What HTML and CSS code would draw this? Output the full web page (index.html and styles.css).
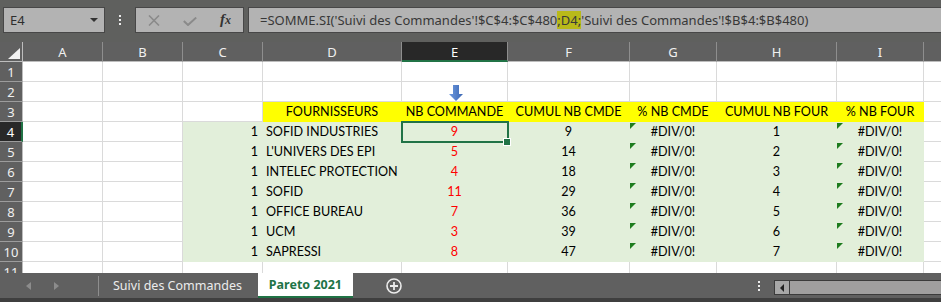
FILE: index.html
```html
<!DOCTYPE html>
<html lang="fr">
<head>
<meta charset="utf-8">
<title>Pareto 2021</title>
<link rel="stylesheet" href="styles.css">
</head>
<body>
<div class="app">
  <div class="fbar">
    <div class="namebox"><span>E4</span><span class="caret"></span></div>
    <div class="grip"><span></span><span></span><span></span></div>
    <div class="fbtns">
      <svg class="ic-x" width="12" height="11" viewBox="0 0 12 11"><path d="M1 0.5 L11 10.5 M11 0.5 L1 10.5" stroke="#8a8a8a" stroke-width="1.6" fill="none"/></svg>
      <svg class="ic-ok" width="14" height="9" viewBox="0 0 14 9"><path d="M0.8 4 L5 8 L13.2 0.6" stroke="#8a8a8a" stroke-width="2" fill="none"/></svg>
      <span class="fx"><i>f</i><i class="x">x</i></span>
    </div>
    <div class="formula">=SOMME.SI('Suivi des Commandes'!$C$4:$C$480<span class="hl">;D4;</span>'Suivi des Commandes'!$B$4:$B$480)</div>
  </div>

  <div class="sheet">
    <div class="ch corner"><svg width="12" height="11" viewBox="0 0 12 11"><polygon points="12,0 12,11 0,11" fill="#f2f2f2"/></svg></div>
    <div class="ch">A</div><div class="ch">B</div><div class="ch">C</div><div class="ch">D</div><div class="ch sel">E</div><div class="ch">F</div><div class="ch">G</div><div class="ch">H</div><div class="ch">I</div><div class="ch"></div>

    <div class="rh">1</div>
    <div class="c"></div><div class="c"></div><div class="c"></div><div class="c"></div><div class="c"></div><div class="c"></div><div class="c"></div><div class="c"></div><div class="c"></div><div class="c"></div>

    <div class="rh">2</div>
    <div class="c"></div><div class="c"></div><div class="c"></div><div class="c"></div>
    <div class="c arrowcell"><svg width="14" height="16" viewBox="0 0 14 16"><defs><linearGradient id="ag" x1="0" y1="0" x2="1" y2="0"><stop offset="0" stop-color="#6f9be0"/><stop offset="1" stop-color="#3b66b3"/></linearGradient></defs><path d="M4 0 H10 V9 H14 L7 16 L0 9 H4 Z" fill="url(#ag)"/></svg></div>
    <div class="c"></div><div class="c"></div><div class="c"></div><div class="c"></div><div class="c"></div>

    <div class="rh">3</div>
    <div class="c"></div><div class="c"></div><div class="c"></div>
    <div class="c y ctr">FOURNISSEURS</div><div class="c y ctr">NB COMMANDE</div><div class="c y ctr">CUMUL NB CMDE</div><div class="c y ctr">% NB CMDE</div><div class="c y ctr">CUMUL NB FOUR</div><div class="c y ctr">% NB FOUR</div>
    <div class="c"></div>

    <div class="rh sel">4</div>
    <div class="c"></div><div class="c"></div><div class="c g r">1</div><div class="c g">SOFID INDUSTRIES</div><div class="c g ctr red">9</div><div class="c g ctr">9</div><div class="c g ctr flag">#DIV/0!</div><div class="c g ctr">1</div><div class="c g ctr flag">#DIV/0!</div><div class="c"></div>

    <div class="rh">5</div>
    <div class="c"></div><div class="c"></div><div class="c g r">1</div><div class="c g">L'UNIVERS DES EPI</div><div class="c g ctr red">5</div><div class="c g ctr">14</div><div class="c g ctr flag">#DIV/0!</div><div class="c g ctr">2</div><div class="c g ctr flag">#DIV/0!</div><div class="c"></div>

    <div class="rh">6</div>
    <div class="c"></div><div class="c"></div><div class="c g r">1</div><div class="c g">INTELEC PROTECTION</div><div class="c g ctr red">4</div><div class="c g ctr">18</div><div class="c g ctr flag">#DIV/0!</div><div class="c g ctr">3</div><div class="c g ctr flag">#DIV/0!</div><div class="c"></div>

    <div class="rh">7</div>
    <div class="c"></div><div class="c"></div><div class="c g r">1</div><div class="c g">SOFID</div><div class="c g ctr red">11</div><div class="c g ctr">29</div><div class="c g ctr flag">#DIV/0!</div><div class="c g ctr">4</div><div class="c g ctr flag">#DIV/0!</div><div class="c"></div>

    <div class="rh">8</div>
    <div class="c"></div><div class="c"></div><div class="c g r">1</div><div class="c g">OFFICE BUREAU</div><div class="c g ctr red">7</div><div class="c g ctr">36</div><div class="c g ctr flag">#DIV/0!</div><div class="c g ctr">5</div><div class="c g ctr flag">#DIV/0!</div><div class="c"></div>

    <div class="rh">9</div>
    <div class="c"></div><div class="c"></div><div class="c g r">1</div><div class="c g">UCM</div><div class="c g ctr red">3</div><div class="c g ctr">39</div><div class="c g ctr flag">#DIV/0!</div><div class="c g ctr">6</div><div class="c g ctr flag">#DIV/0!</div><div class="c"></div>

    <div class="rh">10</div>
    <div class="c"></div><div class="c"></div><div class="c g r">1</div><div class="c g">SAPRESSI</div><div class="c g ctr red">8</div><div class="c g ctr">47</div><div class="c g ctr flag">#DIV/0!</div><div class="c g ctr">7</div><div class="c g ctr flag">#DIV/0!</div><div class="c"></div>

    <div class="rh">11</div>
    <div class="c"></div><div class="c"></div><div class="c"></div><div class="c"></div><div class="c"></div><div class="c"></div><div class="c"></div><div class="c"></div><div class="c"></div><div class="c"></div>

    <div class="selbox"></div>
    <div class="handle"></div>
  </div>

  <div class="tabs">
    <div class="nav"><span class="tri-l"></span><span class="tri-r"></span></div>
    <div class="sep"></div>
    <div class="tab">Suivi des Commandes</div>
    <div class="tab active">Pareto 2021</div>
    <div class="add"><svg width="16" height="16" viewBox="0 0 16 16"><circle cx="8" cy="8" r="7" stroke="#ececec" stroke-width="1.6" fill="none"/><path d="M8 4 V12 M4 8 H12" stroke="#ececec" stroke-width="1.8"/></svg></div>
    <div class="hscroll">
      <div class="vdots"><span></span><span></span><span></span></div>
      <div class="sbar"><div class="sbtn"><span class="tri-b"></span></div></div>
    </div>
  </div>
</div>
</body>
</html>
```

FILE: styles.css
```css
* { box-sizing: border-box; }
html, body { margin: 0; padding: 0; }
body {
  width: 941px;
  height: 302px;
  overflow: hidden;
  background: #5f5f5f;
  font-family: "Noto Sans", "Open Sans", sans-serif;
}
.app { display: flex; flex-direction: column; height: 302px; }

/* formula bar */
.fbar {
  height: 42px;
  flex: none;
  display: flex;
  align-items: flex-start;
  padding: 7px 0 0 3px;
  background: #5f605e;
}
.namebox {
  width: 102px;
  height: 26px;
  background: #b3b3b3;
  border: 1px solid #474747;
  display: flex;
  align-items: center;
  justify-content: space-between;
  padding: 0 6px 0 6px;
  color: #2e2e2e;
  font-size: 13px;
}
.caret {
  width: 0; height: 0;
  border-left: 4px solid transparent;
  border-right: 4px solid transparent;
  border-top: 4px solid #333;
}
.grip {
  width: 30px;
  height: 26px;
  display: flex;
  flex-direction: column;
  align-items: center;
  justify-content: center;
  gap: 2px;
}
.grip span { width: 2px; height: 2px; background: #ececec; }
.fbtns {
  width: 109px;
  height: 26px;
  background: #b3b3b3;
  border: 1px solid #474747;
  display: flex;
  align-items: center;
  padding-left: 12px;
  gap: 23px;
}
.ic-ok { margin-top: 3px; }
.fx {
  font-family: "Liberation Serif", serif;
  font-weight: bold;
  color: #333;
  font-size: 15px;
  line-height: 1;
  margin-top: -1px;
}
.fx .x { font-size: 12px; }
.formula {
  flex: 1;
  margin-left: 4px;
  height: 26px;
  background: #b3b3b3;
  border: 1px solid #474747;
  border-right: none;
  padding-left: 11px;
  font-size: 13px;
  color: #383838;
  line-height: 24px;
  white-space: nowrap;
  overflow: hidden;
}
.hl { background: #b9b91a; }

/* sheet grid */
.sheet {
  position: relative;
  flex: none;
  height: 231px;
  overflow: hidden;
  background: #fff;
  display: grid;
  grid-template-columns: 23px 80px 80px 80px 139px 106px 122px 87px 120px 87px 40px;
  grid-auto-rows: 20px;
  align-content: start;
}
.ch {
  background: #606060;
  color: #f0f0f0;
  font-size: 13px;
  text-align: center;
  line-height: 20px;
  border-right: 1px solid #8e8e8e;
  border-bottom: 1px solid #bdbdbd;
}
.ch.corner {
  display: flex;
  align-items: flex-end;
  justify-content: flex-end;
  padding: 0 2px 2px 0;
  border-right-color: #bdbdbd;
}
.ch.sel {
  background: #282828;
  color: #fff;
  border-bottom: 2px solid #217346;
}
.rh {
  background: #606060;
  color: #f0f0f0;
  font-size: 13px;
  text-align: center;
  line-height: 20px;
  border-right: 1px solid #bdbdbd;
  border-bottom: 1px solid #9c9c9c;
}
.rh.sel {
  background: #282828;
  color: #fff;
  border-right: 2px solid #217346;
}
.c {
  border-right: 1px solid #dadada;
  border-bottom: 1px solid #dadada;
  font-family: Lato, "Liberation Sans", sans-serif;
  font-size: 12.6px;
  line-height: 20px;
  color: #000;
  padding: 0 3px;
  white-space: nowrap;
}
.y { background: #ffff00; border-color: #ffff00; }
.g { background: #e2efda; border-color: #e2efda; }
.ctr { text-align: center; }
.r { text-align: right; padding-right: 4px; }
.red { color: #ff0000; }
.flag { position: relative; }
.flag::before {
  content: "";
  position: absolute;
  top: 1px;
  left: 0;
  border-top: 6px solid #1e7c1e;
  border-right: 6px solid transparent;
}
.arrowcell {
  display: flex;
  justify-content: center;
  align-items: flex-end;
  padding-left: 5px;
}
.selbox {
  position: absolute;
  left: 401px;
  top: 79px;
  width: 108px;
  height: 22px;
  border: 2px solid #217346;
}
.handle {
  position: absolute;
  left: 503px;
  top: 96px;
  width: 8px;
  height: 8px;
  background: #217346;
  border: 1px solid #fff;
}

/* sheet tabs */
.tabs {
  flex: none;
  height: 29px;
  background: #606060;
  border-bottom: 4px solid #3f3f3f;
  display: flex;
  align-items: stretch;
  font-size: 12.5px;
}
.nav {
  width: 98px;
  display: flex;
  align-items: center;
  padding-left: 26px;
  gap: 23px;
}
.tri-l, .tri-r { width: 0; height: 0; border-top: 4px solid transparent; border-bottom: 4px solid transparent; }
.tri-l { border-right: 5px solid #8c8c8c; }
.tri-r { border-left: 5px solid #8c8c8c; }
.sep { width: 1px; background: #8e8e8e; margin: 3px 0 2px; }
.tab {
  padding: 0 16px 0 14px;
  color: #ececec;
  line-height: 25px;
  white-space: nowrap;
}
.tab.active {
  width: 95px;
  padding: 0;
  text-align: center;
  background: #fff;
  color: #217346;
  font-weight: bold;
  border-bottom: 2px solid #217346;
  line-height: 23px;
  height: 25px;
}
.add {
  margin-left: 33px;
  display: flex;
  align-items: center;
}
.hscroll {
  margin-left: auto;
  display: flex;
  align-items: flex-start;
  gap: 14px;
}
.vdots {
  margin-top: 8px;
  display: flex;
  flex-direction: column;
  gap: 2px;
}
.vdots span { width: 2px; height: 2px; background: #ececec; }
.sbar {
  margin-top: 7px;
  width: 167px;
  height: 15px;
  background: #a09f9f;
  border: 1px solid #3b3b3b;
  border-right: none;
  display: flex;
}
.sbtn {
  width: 15px;
  border-right: 1px solid #3b3b3b;
  background: #a7a7a7;
  display: flex;
  align-items: center;
  justify-content: center;
}
.tri-b { width: 0; height: 0; border-top: 4px solid transparent; border-bottom: 4px solid transparent; border-right: 4px solid #222; }
```
